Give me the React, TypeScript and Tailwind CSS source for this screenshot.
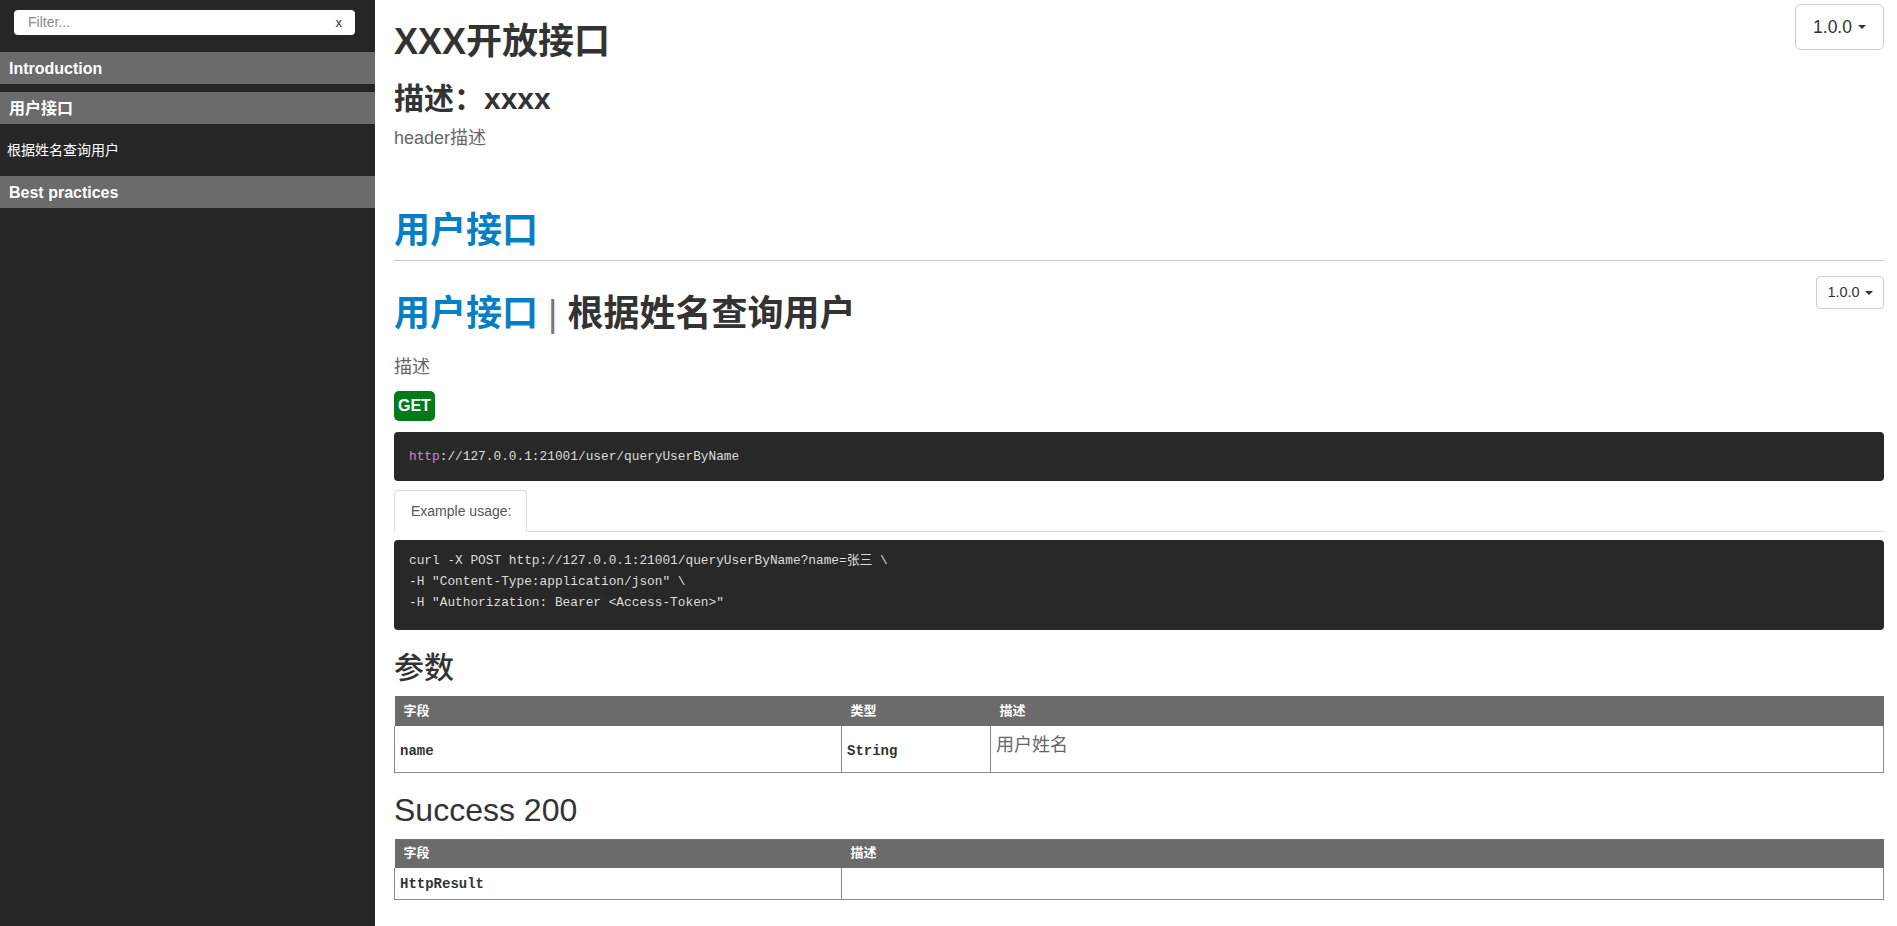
import React from 'react';

// apidoc-style API page: dark side nav + endpoint docs

const SANS = "font-['Liberation_Sans','Noto_Sans_CJK_SC',sans-serif]";
const MONO = "font-['Liberation_Mono','Noto_Sans_CJK_SC',monospace]";

function Caret({ size = 4 }: { size?: number }) {
  return (
    <span
      className="inline-block border-x-transparent border-t-[#333]"
      style={{ borderLeftWidth: size, borderRightWidth: size, borderTopWidth: size, borderStyle: 'solid', borderBottomWidth: 0 }}
    />
  );
}

function VersionButton({ big }: { big?: boolean }) {
  return big ? (
    <button className="h-[46px] w-[89px] shrink-0 border border-[#ccc] rounded-[6px] bg-white text-[17.5px] text-[#333] flex items-center justify-center gap-[6px]">
      1.0.0 <Caret size={4} />
    </button>
  ) : (
    <button className="h-[33px] w-[68px] shrink-0 border border-[#ccc] rounded-[4px] bg-white text-[14.5px] text-[#333] flex items-center justify-center gap-[5px]">
      1.0.0 <Caret size={4} />
    </button>
  );
}

function NavBar({ label, className = '' }: { label: string; className?: string }) {
  return (
    <div className={`h-[32px] bg-[#6b6b6b] text-white font-bold text-[16px] pl-[9px] pt-[1px] flex items-center ${className}`}>
      {label}
    </div>
  );
}

function Sidebar() {
  return (
    <aside className="w-[375px] shrink-0 bg-[#262626] min-h-screen pt-[10px]">
      <div className="ml-[14px] mr-[20px] h-[25px] bg-white rounded-[4px] flex items-center pl-[14px] pr-[13px]">
        <input
          placeholder="Filter..."
          className="flex-1 min-w-0 bg-transparent outline-none text-[14px] text-[#333] placeholder:text-[#8a8a8a]"
        />
        <span className="text-[13px] text-[#333]">x</span>
      </div>
      <NavBar label="Introduction" className="mt-[17px]" />
      <NavBar label="用户接口" className="mt-[8px]" />
      <div className="h-[52px] flex items-center pl-[7px] text-[14px] text-white">根据姓名查询用户</div>
      <NavBar label="Best practices" />
    </aside>
  );
}

function ParamTable() {
  return (
    <table className="mt-[10px] w-full table-fixed border-collapse">
      <colgroup>
        <col className="w-[447px]" />
        <col className="w-[149px]" />
        <col />
      </colgroup>
      <thead>
        <tr className="h-[30px] bg-[#6b6b6b] text-white text-[13px] font-bold text-left">
          <th className="px-[9px] font-bold">字段</th>
          <th className="px-[9px] font-bold">类型</th>
          <th className="px-[9px] font-bold">描述</th>
        </tr>
      </thead>
      <tbody>
        <tr className="h-[46px]">
          <td className={`border border-t-0 border-[#8a8a8a] px-[5px] pt-[6px] ${MONO} font-bold text-[14px]`}>name</td>
          <td className={`border border-t-0 border-[#8a8a8a] px-[5px] pt-[6px] ${MONO} font-bold text-[14px]`}>String</td>
          <td className="border border-t-0 border-[#8a8a8a] px-[5px] align-top pt-[7px] text-[18px] leading-[24px] text-[#666]">
            用户姓名
          </td>
        </tr>
      </tbody>
    </table>
  );
}

function SuccessTable() {
  return (
    <table className="mt-[11px] w-full table-fixed border-collapse">
      <colgroup>
        <col className="w-[447px]" />
        <col />
      </colgroup>
      <thead>
        <tr className="h-[29px] bg-[#6b6b6b] text-white text-[13px] font-bold text-left">
          <th className="px-[9px] font-bold">字段</th>
          <th className="px-[9px] font-bold">描述</th>
        </tr>
      </thead>
      <tbody>
        <tr className="h-[32px]">
          <td className={`border border-t-0 border-[#8a8a8a] px-[5px] pt-[3px] ${MONO} font-bold text-[14px]`}>HttpResult</td>
          <td className="border border-t-0 border-[#8a8a8a] px-[5px]" />
        </tr>
      </tbody>
    </table>
  );
}

export default function App() {
  return (
    <div className={`flex min-h-screen bg-white ${SANS}`}>
      <Sidebar />
      <main className="flex-1 min-w-0 pl-[19px] pr-[13px] pt-[4px] pb-[27px] text-[#333]">
        {/* header */}
        <div className="flex justify-between items-start">
          <div className="pt-[16px]">
            <h1 className="text-[36px] leading-[44px] font-bold">XXX开放接口</h1>
            <h2 className="mt-[17px] text-[30px] leading-[36px] font-bold">描述：xxxx</h2>
            <p className="mt-[9px] text-[18px] leading-[24px] text-[#666]">header描述</p>
          </div>
          <VersionButton big />
        </div>

        {/* group */}
        <h1 className="mt-[59px] text-[36px] leading-[44px] font-bold text-[#0580c5]">用户接口</h1>
        <div className="mt-[7px] border-t border-[#c8c8c8]" />

        <div className="mt-[15px] flex justify-between items-start">
          <h2 className="pt-[16px] text-[36px] leading-[44px] font-bold">
            <span className="text-[#0580c5]">用户接口</span>
            <span className="font-normal text-[#777]"> | </span>
            根据姓名查询用户
          </h2>
          <VersionButton />
        </div>

        <p className="mt-[19px] text-[18px] leading-[24px] text-[#666]">描述</p>

        <div className="mt-[12px] flex">
          <span className="h-[30px] px-[4px] rounded-[5px] bg-[#007a1b] text-white font-bold text-[16px] leading-[30px]">
            GET
          </span>
        </div>

        <div className={`mt-[11px] h-[49px] rounded-[4px] bg-[#282828] px-[15px] flex items-center ${MONO} text-[12.8px] text-[#ddd]`}>
          <span className="text-[#c88bc8]">http</span>://127.0.0.1:21001/user/queryUserByName
        </div>

        <div className="mt-[9px] flex items-end border-b border-[#ddd]">
          <div className="-mb-px h-[42px] w-[133px] border border-b-0 border-[#ddd] rounded-t-[4px] bg-white flex items-center pl-[16px] text-[14px] text-[#555]">
            Example usage:
          </div>
        </div>

        <pre className={`mt-[8px] h-[90px] rounded-[4px] bg-[#282828] px-[15px] pt-[10px] ${MONO} text-[12.8px] leading-[21px] text-[#ddd]`}>
{`curl -X POST http://127.0.0.1:21001/queryUserByName?name=张三 \\
-H "Content-Type:application/json" \\
-H "Authorization: Bearer <Access-Token>"`}
        </pre>

        <h2 className="mt-[20px] text-[30px] leading-[36px] font-medium">参数</h2>
        <ParamTable />

        <h2 className="mt-[19px] text-[32px] leading-[36px] font-medium">Success 200</h2>
        <SuccessTable />
      </main>
    </div>
  );
}
